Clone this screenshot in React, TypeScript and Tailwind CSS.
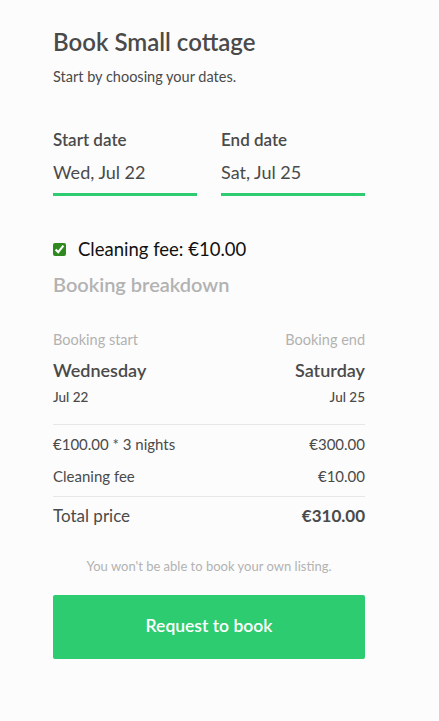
import React from "react";

const font = { fontFamily: "Lato, 'Open Sans', sans-serif" };

function DateField({ label, value }: { label: string; value: string }) {
  return (
    <div className="flex-1">
      <div className="text-[17px] font-semibold leading-[20px] text-[#4a4a4a]">{label}</div>
      <div className="mt-[11px] border-b-[3px] border-[#2ecc71] pb-[10px] text-[18px] leading-[22px] text-[#4a4a4a]">
        {value}
      </div>
    </div>
  );
}

function LineItem({ label, value, total }: { label: string; value: string; total?: boolean }) {
  return (
    <div className="flex items-center justify-between">
      <span className={total ? "text-[17px] text-[#4a4a4a]" : "text-[15px] text-[#4a4a4a]"}>{label}</span>
      <span
        className={
          total ? "text-[17px] font-bold text-[#4a4a4a]" : "text-[15px] text-[#4a4a4a]"
        }
      >
        {value}
      </span>
    </div>
  );
}

export default function App() {
  return (
    <div className="min-h-[721px] w-full bg-[#fcfcfc]" style={font}>
      <div className="w-[312px] ml-[53px] pt-[28px]">
        <h1 className="text-[24px] font-semibold leading-[28px] text-[#4a4a4a]">Book Small cottage</h1>
        <p className="mt-[12px] text-[14.5px] leading-[18px] text-[#4a4a4a]">Start by choosing your dates.</p>

        <div className="mt-[44px] flex gap-[24px]">
          <DateField label="Start date" value="Wed, Jul 22" />
          <DateField label="End date" value="Sat, Jul 25" />
        </div>

        <label className="mt-[42px] flex items-center gap-[12px]">
          <input type="checkbox" defaultChecked className="h-[13px] w-[13px] accent-[#2e8a1e]" />
          <span className="text-[18.5px] leading-[22px] text-[#111]">Cleaning fee: €10.00</span>
        </label>

        <h2 className="mt-[12px] text-[20px] font-semibold leading-[24px] text-[#b2b2b2]">Booking breakdown</h2>

        <div className="mt-[36px] flex justify-between">
          <div>
            <div className="text-[14.5px] font-normal leading-[16px] text-[#b2b2b2]">Booking start</div>
            <div className="mt-[12px] text-[18px] font-semibold leading-[20px] text-[#4a4a4a]">Wednesday</div>
            <div className="mt-[9px] text-[13.5px] font-medium leading-[16px] text-[#4a4a4a]">Jul 22</div>
          </div>
          <div className="text-right">
            <div className="text-[14.5px] font-normal leading-[16px] text-[#b2b2b2]">Booking end</div>
            <div className="mt-[12px] text-[18px] font-semibold leading-[20px] text-[#4a4a4a]">Saturday</div>
            <div className="mt-[9px] text-[13.5px] font-medium leading-[16px] text-[#4a4a4a]">Jul 25</div>
          </div>
        </div>

        <div className="mt-[19px] border-t border-[#e7e7e7] pt-[8px]">
          <div className="flex flex-col gap-[9px]">
            <LineItem label="€100.00 * 3 nights" value="€300.00" />
            <LineItem label="Cleaning fee" value="€10.00" />
          </div>
        </div>

        <div className="mt-[9px] border-t border-[#e7e7e7] pt-[6px]">
          <LineItem label="Total price" value="€310.00" total />
        </div>

        <p className="mt-[29px] text-center text-[13px] leading-[16px] text-[#b2b2b2]">
          You won't be able to book your own listing.
        </p>

        <button className="mt-[21px] flex h-[64px] w-full items-center justify-center rounded-[2px] bg-[#2ecc71] text-[17.5px] font-semibold text-white">
          Request to book
        </button>
      </div>
    </div>
  );
}
